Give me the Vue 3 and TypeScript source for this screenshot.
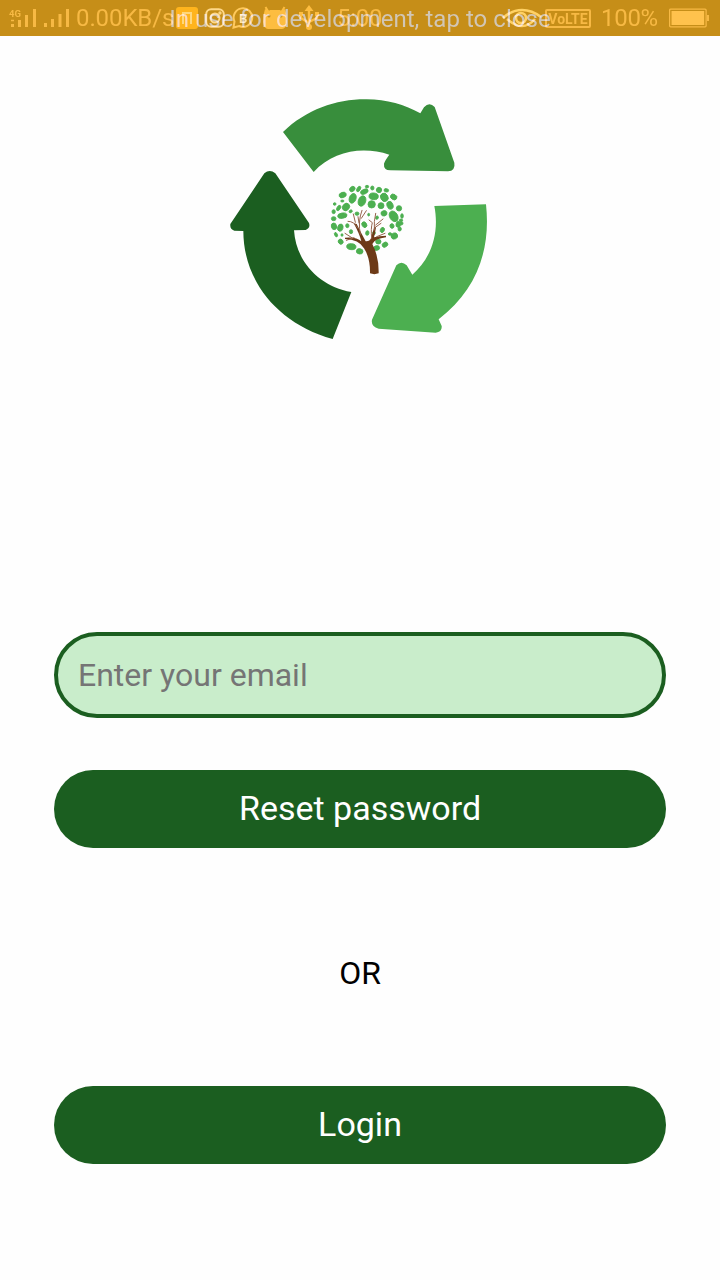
<script setup lang="ts">
import { ref } from 'vue'

const email = ref('')

// Leaves of the tree: cx, cy, rx, ry, rotation
const leaves: number[][] = [
  [368, 315, 11, 8, -20], [397, 297, 9, 7, -40], [416, 297, 5, 9, 30], [433, 305, 12, 7, -25], [441, 290, 5, 4, 0],
  [457, 294, 5, 6, 0], [477, 300, 8, 8, 20], [499, 301, 7, 5, 10], [398, 325, 10, 15, 20], [426, 333, 11, 16, 20],
  [461, 319, 14, 10, 5], [493, 322, 11, 13, -30], [521, 321, 10, 8, 30], [455, 343, 11, 11, 0], [483, 347, 9, 9, 0],
  [510, 346, 9, 12, -20], [378, 351, 10, 12, 40], [356, 354, 5, 9, 30], [344, 342, 4, 4, 0], [367, 333, 5, 3, 0],
  [537, 355, 8, 8, 0], [341, 365, 5, 6, 0], [367, 377, 14, 8, -8], [392, 364, 5, 4, -30], [411, 371, 6, 5, 0],
  [446, 374, 3, 4, 0], [492, 370, 9, 8, -15], [521, 379, 12, 17, -30], [546, 378, 4, 7, 0], [341, 386, 7, 6, 0],
  [471, 383, 4, 5, 20], [382, 407, 5, 6, 0], [342, 409, 8, 10, -15], [361, 413, 8, 11, 15], [433, 404, 7, 9, -30],
  [487, 420, 6, 8, 25], [516, 408, 6, 7, -20], [535, 403, 7, 9, 10], [544, 400, 5, 5, 0], [543, 391, 5, 4, 0],
  [393, 425, 5, 6, 0], [442, 429, 5, 7, 10], [348, 434, 4, 7, -25], [366, 435, 3, 4, 0], [362, 455, 7, 8, -35],
  [510, 432, 5, 4, 0], [523, 438, 10, 9, -20], [539, 417, 5, 6, 0], [475, 455, 8, 7, 0], [495, 464, 9, 7, -35],
  [470, 474, 9, 7, -10], [394, 470, 14, 9, 5], [419, 484, 10, 8, 10], [462, 429, 4, 5, 0],
]
</script>

<template>
  <main class="screen">
    <header class="status">
      <div class="status-row">
        <svg class="signal" width="28" height="36" viewBox="0 0 28 36">
          <text x="0" y="17" class="tiny">4G</text>
          <path d="M3.5 24v3M10.5 20v7M17.5 15v12M25.5 9v18" stroke-width="3" />
          <path d="M2 20.500h3" stroke-width="1.500" />
        </svg>
        <svg class="signal second" width="26" height="36" viewBox="0 0 26 36">
          <path d="M2.500 23v4M9.500 19v8M17 14v13M24.500 9v18" stroke-width="3" />
        </svg>
        <span class="speed">0.00KB/s</span>
        <span class="badge"><i></i></span>
        <svg class="note insta" width="20" height="20" viewBox="0 0 20 20">
          <rect x="1.2" y="1.2" width="17.6" height="17.6" rx="5" />
          <circle cx="10" cy="10" r="4.5" /><circle cx="15" cy="5" r=".7" />
        </svg>
        <svg class="note chat" width="22" height="22" viewBox="0 0 22 22">
          <path d="M1.500 20.500l1-6A9.3 9.3 0 1 1 7 19Z" />
          <text x="7" y="15.500" class="letter">B</text>
        </svg>
        <svg class="droid" width="26" height="26" viewBox="0 0 26 26">
          <path d="M3.500 2l3 5M22.500 2l-3 5" stroke="#fdbd40" stroke-width="2" />
          <path d="M1 17Q1 10 3 4Q7 7 8 5H18Q19 7 23 4Q25 10 25 17Q24 24 20 24H6Q2 24 1 17Z" fill="#fdbd40" />
          <circle cx="7" cy="11" r="1.5" fill="#c68e18" /><circle cx="19" cy="11" r="1.5" fill="#c68e18" />
        </svg>
        <svg class="usb" width="22" height="26" viewBox="0 0 22 26">
          <path d="M11 3v20M11 18L3 13V9M11 17l8-4V9" fill="none" stroke="#fdbd40" stroke-width="2.4" />
          <path d="M11 0L6.500 6h9ZM1 7h4v4H1ZM17 7h4v4h-4Z" fill="#fdbd40" />
          <circle cx="11" cy="22" r="3" fill="#fdbd40" />
        </svg>
        <span class="time">5:00</span>
        <svg class="eye" width="40" height="20" viewBox="0 0 40 20">
          <path d="M1 10Q10 2 20 2T39 9M5 11q8 7 15 7t13-7" />
          <circle cx="19" cy="10" r="5" />
        </svg>
        <span class="volte">VoLTE</span>
        <span class="percent">100%</span>
        <svg class="battery" width="41" height="20" viewBox="0 0 41 20">
          <rect x=".6" y="1.2" width="36.5" height="17.6" rx="1" />
          <rect x="2.5" y="3" width="32.7" height="14" class="fill" />
          <path d="M39 7v6" stroke-width="2" />
        </svg>
      </div>
      <div class="debug">In use for development, tap to close</div>
    </header>

    <svg class="logo" width="280" height="260" viewBox="0 0 840 780">
      <path fill="#388e3c" d="M189 126C260 58 350 27 440 28C500 29 555 44 601 70L612 52Q628 34 644 51L703 218Q707 242 684 244L511 241Q490 240 492 221Q495 211 508 194C430 168 340 181 281 246Z" />
      <path fill="#4caf50" d="M643 348L798 343C813 480 770 600 656 688L665 708Q667 726 647 728L476 716Q452 710 456 689L529 526Q544 510 560 526L577 554C634 504 659 430 643 348Z" />
      <path fill="#1b5e20" d="M394 606L338 747C170 700 70 570 70 423L43 422Q29 418 31 402L133 250Q149 236 166 250L267 399Q272 414 257 420L222 421C228 516 300 590 394 606Z" />
      <g class="leaves">
        <ellipse
          v-for="(l, i) in leaves" :key="i"
          :cx="l[0]" :cy="l[1]" :rx="l[2]" :ry="l[3]"
          :transform="`rotate(${l[4]} ${l[0]} ${l[1]})`"
        />
      </g>
      <path fill="#6d3a17" d="M375 443Q410 440 424 454Q418 430 401 400L410 402Q423 428 437 454Q449 455 453 445L463 410L468 412Q465 432 462 442Q478 437 498 437L498 442Q465 446 457 462Q477 500 476 550Q463 555 450 550Q451 504 432 475Q417 448 375 447Z" />
      <g class="twigs">
        <path d="M421 433Q413 395 426 361M417 399L414 380M424 385L439 362M414 415Q402 393 384 394M406 397L400 372M455 445Q452 415 457 398L447 390M463 420Q461 395 467 370M467 405L489 387M463 414L483 400M470 440L495 430M397 444L375 430M402 443L379 451" />
      </g>
    </svg>

    <form class="form" @submit.prevent>
      <input v-model="email" class="field" type="email" placeholder="Enter your email" />
      <button class="action" type="submit">Reset password</button>
      <p class="or">OR</p>
      <button class="action" type="button">Login</button>
    </form>
  </main>
</template>

<style>
body { margin: 0; background: #fff; }
</style>

<style scoped>
.screen {
  width: 720px;
  height: 1280px;
  overflow: hidden;
  display: flex;
  flex-direction: column;
  background: #fefefe;
  font-family: Roboto, sans-serif;
}
.status {
  position: relative;
  isolation: isolate;
  flex: none;
  height: 36px;
  background: #c68e18;
  color: #f7b944;
}
.status-row {
  display: flex;
  align-items: center;
  height: 36px;
  padding-left: 9px;
  font-size: 24px;
  line-height: 36px;
  white-space: nowrap;
}
.status-row > * { flex: none; }
.signal path { stroke: #f7b944; }
.tiny { font: 700 9.5px Roboto, sans-serif; fill: #f7b944; }
.second { margin-left: 6px; }
.speed { width: 99px; margin-left: 7px; letter-spacing: -0.1px; }
.badge {
  display: flex;
  justify-content: center;
  align-items: center;
  width: 22px;
  height: 22px;
  margin-left: 1px;
  border-radius: 3px;
  background: #ffb41d;
}
.badge i { width: 6px; height: 10px; border: 2px solid #ffd77c; border-bottom: 0; }
.note { fill: none; stroke: #ffd98b; stroke-width: 2; }
.insta { margin-left: 7px; }
.chat { margin-left: 7px; stroke: #ffc95c; }
.letter { font: 700 13px Roboto, sans-serif; fill: #ffe3a4; stroke: none; }
.droid { margin-left: 8px; }
.usb { margin-left: 10px; }
.time { width: 47px; margin-left: 17px; letter-spacing: -0.3px; }
.eye { margin-left: 118px; fill: none; stroke: #ffd164; stroke-width: 2.6; }
.volte {
  box-sizing: border-box;
  width: 46px;
  height: 19px;
  margin-left: 3px;
  border: 2px solid #f7b944;
  border-radius: 2px;
  font-size: 14px;
  font-weight: 700;
  line-height: 16px;
  text-align: center;
}
.percent { width: 58px; margin-left: 10px; letter-spacing: -0.3px; }
.battery { margin-left: 10px; fill: none; stroke: #f7b944; stroke-width: 1.3; }
.battery .fill { fill: #ffc24d; stroke: none; }
.debug {
  position: absolute;
  inset: 0;
  padding-top: 1px;
  color: #337ead;
  mix-blend-mode: screen;
  font-size: 24px;
  line-height: 36px;
  letter-spacing: 0.05px;
  text-align: center;
  white-space: nowrap;
}
.logo { flex: none; margin: 54px 0 0 220px; }
.leaves { fill: #4caf50; stroke: #4caf50; stroke-width: 2.5; }
.twigs { fill: none; stroke: #97644d; stroke-width: 3; stroke-linecap: round; }
.form {
  display: flex;
  flex-direction: column;
  margin: 282px 54px 0;
}
.field {
  box-sizing: border-box;
  width: 100%;
  height: 86px;
  padding: 0 20px;
  border: 4px solid #1b5e20;
  border-radius: 43px;
  outline: 0;
  background: #c9edcb;
  font: 32px Roboto, sans-serif;
  color: #000;
}
.field::placeholder { color: #757575; opacity: 1; }
.action {
  height: 78px;
  padding: 0 0 2px;
  border: 0;
  border-radius: 39px;
  background: #1b5e20;
  color: #fff;
  font: 34px/76px Roboto, sans-serif;
}
.field + .action { margin-top: 52px; }
.or {
  margin: 106px 0 94px;
  font-size: 32px;
  line-height: 38px;
  text-align: center;
  color: #000;
}
</style>
